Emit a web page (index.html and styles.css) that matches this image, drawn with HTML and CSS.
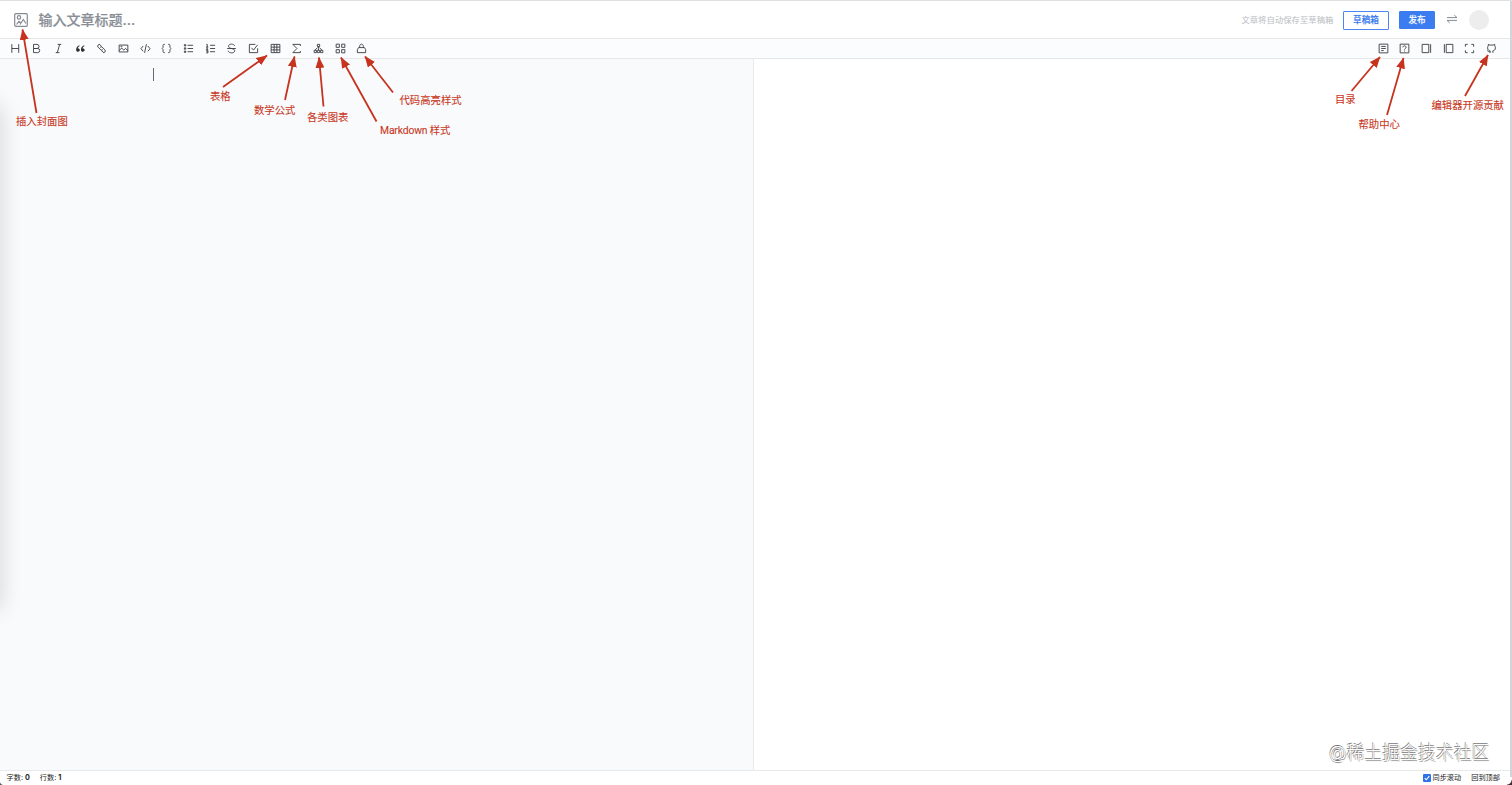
FILE: index.html
```html
<!DOCTYPE html>
<html lang="zh-CN">

<head>
    <meta charset="UTF-8">
    <meta name="viewport" content="width=device-width, initial-scale=1.0">
    <title>写文章</title>
    <link rel="stylesheet" href="styles.css">
</head>

<body>
    <div class="page">
        <header class="header">
            <svg class="cover-icon" viewBox="0 0 14 14">
                <rect x=".7" y=".7" width="12.6" height="12.6" rx="1" />
                <circle cx="5" cy="4.4" r="1.7" />
                <path d="M2.5 11.5L5 8.3l1.5 1.2M6 11.5l3.3-5 2.7 4" />
            </svg>
            <div class="title">输入文章标题...</div>
            <span class="save-tip">文章将自动保存至草稿箱</span>
            <button class="btn btn-draft">草稿箱</button>
            <button class="btn btn-publish">发布</button>
            <svg class="switch-icon" viewBox="0 0 12 10">
                <path d="M1 3.6h10L8.3 1.1M11 6.4H1l2.7 2.5" />
            </svg>
            <div class="avatar"></div>
        </header>

        <div class="toolbar">
            <div class="tools">
                <svg viewBox="0 0 48 48"><path d="M8 5v38M38 5v38M8 24h30" /></svg>
                <svg viewBox="0 0 48 48"><path d="M11 24h15a9 9 0 0 0 0-18H11zM11 24v18h18a9 9 0 0 0 0-18z" /></svg>
                <svg viewBox="0 0 48 48"><path d="M20 6h16M12 42h16M29 6l-10 36" /></svg>
                <svg viewBox="0 0 48 48"><path class="solid" d="M19 10C10 14 5 21 5 29c0 6 4 9 8 9s8-3 8-7-3-7-7-7h-2c1-5 4-8 8-11zM40 10c-9 4-14 11-14 19 0 6 4 9 8 9s8-3 8-7-3-7-7-7h-2c1-5 4-8 8-11z" /></svg>
                <svg viewBox="0 0 48 48"><path d="M24 15l-6-7a6 6 0 0 0-9 1 7 7 0 0 0 0 9l12 12a7 7 0 0 0 9-1M24 33l6 7a6 6 0 0 0 9-1 7 7 0 0 0 0-9L27 18a7 7 0 0 0-9 1" /></svg>
                <svg viewBox="0 0 48 48"><path d="M5 9h38v30H5zM5 33l11-11 9 9 8-7 10 9" /><circle cx="15" cy="16" r="2" /></svg>
                <svg viewBox="0 0 48 48"><path d="M14 13L4 25l10 11M34 13l10 12-10 11M28 5l-8 38" /></svg>
                <svg viewBox="0 0 48 48"><path d="M17 6h-3c-4 0-5 2-5 5v8l-4 5 4 5v8c0 3 1 5 5 5h3M31 6h3c4 0 5 2 5 5v8l4 5-4 5v8c0 3-1 5-5 5h-3" /></svg>
                <svg viewBox="0 0 48 48"><path d="M20 10h24M20 24h24M20 38h24M6 7h6v6H6zM6 21h6v6H6zM6 35h6v6H6z" /></svg>
                <svg viewBox="0 0 48 48"><path d="M22 10h22M22 24h22M22 38h22M6 6h4v11M5 17h9M5 21h7l-6 7h8M5 33h8v10H5M7 38h6" /></svg>
                <svg viewBox="0 0 48 48"><path d="M5 24h38M38 13c-2-5-7-8-14-8-8 0-13 4-13 9 0 6 6 8 13 10 9 2 14 5 14 10 0 6-6 9-14 9-7 0-13-3-15-9" /></svg>
                <svg viewBox="0 0 48 48"><path d="M42 23v19H6V6h26M15 21l9 10L42 8" /></svg>
                <svg viewBox="0 0 48 48"><path d="M5 6h38v36H5zM5 18h38M5 30h38M18 6v36M30 6v36" /></svg>
                <svg viewBox="0 0 48 48"><path d="M41 13V6H8l18 18L8 42h33v-7" /></svg>
                <svg viewBox="0 0 48 48"><path d="M19 6h10v10H19zM24 16v8M20 20L8 32M28 20l12 12M5 32h10v10H5zM33 32h10v10H33zM24 24v8M19 32h10v10H19z" /></svg>
                <svg viewBox="0 0 48 48"><path d="M5 5h14v14H5zM29 5h14v14H29zM5 29h14v14H5zM29 29h14v14H29z" /></svg>
                <svg viewBox="0 0 48 48"><path d="M11 20h26l5 9v13H6V29zM16 20v-6c0-5 4-9 8-9s8 4 8 9v6" /></svg>
            </div>
            <div class="tools">
                <svg viewBox="0 0 48 48"><path d="M5 5h38v38H5zM14 15h20M14 24h20M14 33h11" /></svg>
                <svg viewBox="0 0 48 48"><path d="M5 5h38v38H5zM17 19c0-9 14-9 14 0 0 5-7 5-7 10M24 33v4" /></svg>
                <svg viewBox="0 0 48 48"><path d="M5 6h29v36H5zM42 5v38" /></svg>
                <svg viewBox="0 0 48 48"><path d="M14 6h29v36H14zM6 5v38" /></svg>
                <svg viewBox="0 0 48 48"><path d="M32 6h10v10M42 32v10H32M16 42H6V32M6 16V6h10" /></svg>
                <svg viewBox="0 0 48 48"><path d="M30 43V34c5-1 11-3 11-13 0-4-1-6-3-8V6l-7 3H17l-7-3v7c-2 2-3 4-3 8 0 10 6 12 11 13v9M18 39c-7 2-8-5-13-6" /></svg>
            </div>
        </div>

        <main class="editor">
            <div class="source"><span class="caret"></span></div>
            <div class="preview"></div>
        </main>

        <footer class="status">
            <span>字数: <b>0</b></span>
            <span>行数: <b>1</b></span>
            <label class="sync">
                <svg class="check" viewBox="0 0 8 8"><rect width="8" height="8" rx="1" /><path d="M1.7 4.2l1.6 1.6 3-3.7" /></svg>
                同步滚动
            </label>
            <span class="to-top">回到顶部</span>
        </footer>

        <div class="side-shadow"></div>
        <div class="edge"></div>
        <div class="corner corner-left"></div>
        <div class="corner corner-right"></div>
        <div class="watermark">@稀土掘金技术社区</div>

        <!-- arrows and notes over the editor -->
        <svg class="arrows" viewBox="0 0 1512 785">
            <defs>
                <marker id="head" viewBox="0 0 11 9" refX="10.5" refY="4.5" markerWidth="11" markerHeight="9" markerUnits="userSpaceOnUse" orient="auto">
                    <path d="M0 0l11 4.5L0 9z" />
                </marker>
            </defs>
            <path d="M36.5 113L22.5 29.5" />
            <path d="M223 87L267 55.5" />
            <path d="M285 100L294.5 56.5" />
            <path d="M323.5 106.5L319 57.5" />
            <path d="M376.5 121.5L341 57.5" />
            <path d="M393 92.5L365 56.5" />
            <path d="M1351.5 91L1380 57" />
            <path d="M1387 115L1403.5 58" />
            <path d="M1465 96L1488 55" />
        </svg>
        <span class="note note-cover">插入封面图</span>
        <span class="note note-table">表格</span>
        <span class="note note-math">数学公式</span>
        <span class="note note-chart">各类图表</span>
        <span class="note note-markdown">Markdown 样式</span>
        <span class="note note-code">代码高亮样式</span>
        <span class="note note-toc">目录</span>
        <span class="note note-help">帮助中心</span>
        <span class="note note-github">编辑器开源贡献</span>
    </div>
</body>

</html>
```
FILE: styles.css
```css
* {
    box-sizing: border-box;
}

body {
    margin: 0;
    font-family: Inter, "Noto Sans CJK SC", sans-serif;
    background: #fff;
}

svg {
    display: block;
    flex: none;
    fill: none;
}

.page {
    position: relative;
    display: flex;
    flex-direction: column;
    height: 785px;
    overflow: hidden;
    border-top: 1px solid #dfe0e2;
}

.header {
    display: flex;
    align-items: center;
    height: 37px;
    padding: 1px 23px 0 14px;
}

.cover-icon {
    width: 14px;
    height: 14px;
    margin-top: -1px;
    stroke: #868a92;
    stroke-width: 1.2;
}

.title {
    flex: 1;
    margin-left: 10.5px;
    font-size: 14px;
    font-weight: 500;
    line-height: 20px;
    color: #8a8f97;
    -webkit-text-stroke: .2px #8a8f97;
}

.save-tip {
    margin-right: 9.5px;
    font-size: 8.4px;
    line-height: 12px;
    color: #babdc2;
}

.btn {
    height: 19px;
    padding: 0;
    border: 1px solid #4c87f1;
    border-radius: 1px;
    font-family: inherit;
    font-size: 8.6px;
    font-weight: 500;
    line-height: 17px;
    -webkit-text-stroke: .15px;
}

.btn-draft {
    width: 46px;
    margin-right: 10px;
    background: #fff;
    color: #3577ee;
}

.btn-publish {
    width: 36px;
    height: 18px;
    border-color: #3b7cf1;
    background: #3b7cf1;
    color: #fff;
    line-height: 16px;
}

.switch-icon {
    width: 12px;
    height: 10px;
    margin: -2px 11px 0;
    stroke: #868a92;
}

.avatar {
    width: 20px;
    height: 20px;
    border-radius: 50%;
    background: #ededed;
}

.toolbar {
    display: flex;
    justify-content: space-between;
    align-items: center;
    height: 21px;
    padding: 0 15px 0 9.5px;
    border-top: 1px solid #e5e7e9;
    border-bottom: 1px solid #e5e7e9;
    background: #fafcfd;
}

.tools {
    display: flex;
    gap: 10.68px;
}

.tools svg {
    width: 11px;
    height: 11px;
    stroke: #3c3f43;
    stroke-width: 4;
}

.tools .solid {
    fill: #2b2d30;
    stroke: none;
}

.editor {
    display: flex;
    flex: 1;
}

.source {
    width: 754px;
    padding: 9px 0 0 153px;
    border-right: 1px solid #e7e9eb;
    background: #f8fafc;
}

.caret {
    display: block;
    width: 1px;
    height: 13px;
    background: #66696e;
}

.preview {
    flex: 1;
    background: #fff;
}

.status {
    display: flex;
    align-items: center;
    gap: 10px;
    height: 15px;
    padding: 0 12px 0 6.5px;
    border-top: 1px solid #e7e9eb;
    font-size: 7.2px;
    line-height: 14px;
    color: #222;
}

.sync {
    display: flex;
    align-items: center;
    gap: 1.5px;
    margin-left: auto;
}

.check {
    width: 8px;
    height: 8px;
}

.check rect {
    fill: #2f73e8;
}

.check path {
    stroke: #fff;
    stroke-width: 1.1;
}

.side-shadow {
    position: absolute;
    top: 100px;
    left: -20px;
    width: 20px;
    height: 504px;
    box-shadow: 0 4px 22px rgba(0, 0, 0, .16);
}

.edge {
    position: absolute;
    top: 0;
    right: 0;
    width: 2px;
    height: 776px;
    background: #d2d4d9;
}

.corner {
    position: absolute;
    bottom: 0;
    width: 5px;
    height: 5px;
}

.corner-left {
    left: 0;
    background: radial-gradient(circle at 100% 0, transparent 5px, #555 6px);
}

.corner-right {
    right: 0;
    background: radial-gradient(circle at 0 0, transparent 4px, #4a2a33 5px);
}

.watermark {
    position: absolute;
    top: 739px;
    left: 1329px;
    font-size: 17.9px;
    font-weight: 300;
    line-height: 26px;
    white-space: nowrap;
    color: #fff;
    text-shadow: -.6px -.6px .6px #777, .5px .5px .8px #888;
}

.arrows {
    position: absolute;
    top: -1px;
    left: 0;
    width: 1512px;
    height: 785px;
}

.arrows > path {
    stroke: #c6331f;
    stroke-width: 1.8;
    marker-end: url(#head);
}

.arrows marker path {
    fill: #c6331f;
}

.note {
    position: absolute;
    font-family: Roboto, "Noto Sans CJK SC", sans-serif;
    font-size: 10.35px;
    line-height: 14px;
    white-space: nowrap;
    color: #c93824;
    -webkit-text-stroke: .1px #c93824;
}

.note-cover {
    top: 114px;
    left: 16px;
}

.note-table {
    top: 89px;
    left: 210px;
}

.note-math {
    top: 103px;
    left: 254px;
}

.note-chart {
    top: 110px;
    left: 307px;
}

.note-markdown {
    top: 123px;
    left: 380px;
    letter-spacing: -.15px;
}

.note-code {
    top: 93px;
    left: 399.5px;
}

.note-toc {
    top: 92px;
    left: 1335px;
}

.note-help {
    top: 117px;
    left: 1358.5px;
}

.note-github {
    top: 98px;
    left: 1431.5px;
}
```
